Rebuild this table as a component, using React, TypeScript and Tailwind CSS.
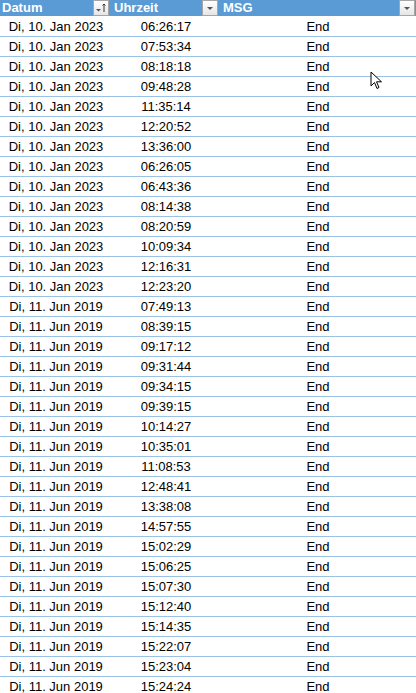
import React from "react";

const jan = ["06:26:17","07:53:34","08:18:18","09:48:28","11:35:14","12:20:52","13:36:00","06:26:05","06:43:36","08:14:38","08:20:59","10:09:34","12:16:31","12:23:20"];
const jun = ["07:49:13","08:39:15","09:17:12","09:31:44","09:34:15","09:39:15","10:14:27","10:35:01","11:08:53","12:48:41","13:38:08","14:57:55","15:02:29","15:06:25","15:07:30","15:12:40","15:14:35","15:22:07","15:23:04","15:24:24"];

const rows = [
  ...jan.map((t) => ({ d: "Di, 10. Jan 2023", t })),
  ...jun.map((t) => ({ d: "Di, 11. Jun 2019", t })),
];

function FilterBtn({ sort }: { sort?: boolean }) {
  return (
    <div className="w-[16px] h-[16px] border border-[#a6a6a6] bg-gradient-to-b from-[#ffffff] to-[#e6e6e6] flex items-center justify-center shrink-0">
      <svg width="14" height="14" viewBox="0 0 14 14">
        {sort ? (
          <>
            <path d="M2 8 L7 8 L4.5 10.5 Z" fill="#555" />
            <path d="M10 3 L10 11" stroke="#333" strokeWidth="1" />
            <path d="M8.5 4.5 L10 3 L11.5 4.5" stroke="#333" strokeWidth="1" fill="none" />
          </>
        ) : (
          <path d="M4 6 L10 6 L7 9 Z" fill="#555" />
        )}
      </svg>
    </div>
  );
}

export default function App() {
  return (
    <div className="relative w-[416px] h-[693px] overflow-hidden bg-white" style={{ fontFamily: '"Liberation Sans", Arial, sans-serif' }}>
      <div className="grid grid-cols-[112px_108px_1fr] h-[16px] mb-[1px] bg-[#5b9bd5] text-white font-bold text-[13px] leading-[16px]">
        <div className="flex items-center justify-between pl-[2px] pr-[3px]">
          <span>Datum</span>
          <FilterBtn sort />
        </div>
        <div className="flex items-center justify-between pl-[2px] pr-[2px]">
          <span>Uhrzeit</span>
          <FilterBtn />
        </div>
        <div className="flex items-center justify-between pl-[3px] pr-[1px]">
          <span>MSG</span>
          <FilterBtn />
        </div>
      </div>
      {rows.map((r, i) => (
        <div key={i} className="grid grid-cols-[112px_108px_1fr] h-[20px] border-b border-[#9bc2e6] text-[13px] text-black leading-[20px]">
          <div className="text-center">{r.d}</div>
          <div className="text-center">{r.t}</div>
          <div className="text-center">End</div>
        </div>
      ))}
      <svg className="absolute left-[370px] top-[71px]" width="14" height="20" viewBox="0 0 14 20">
        <path d="M1 1 L1 15 L4.5 11.5 L7 17.5 L9 16.5 L6.5 10.8 L11.5 10.8 Z" fill="#fff" stroke="#000" strokeWidth="1" strokeLinejoin="round" />
      </svg>
    </div>
  );
}
